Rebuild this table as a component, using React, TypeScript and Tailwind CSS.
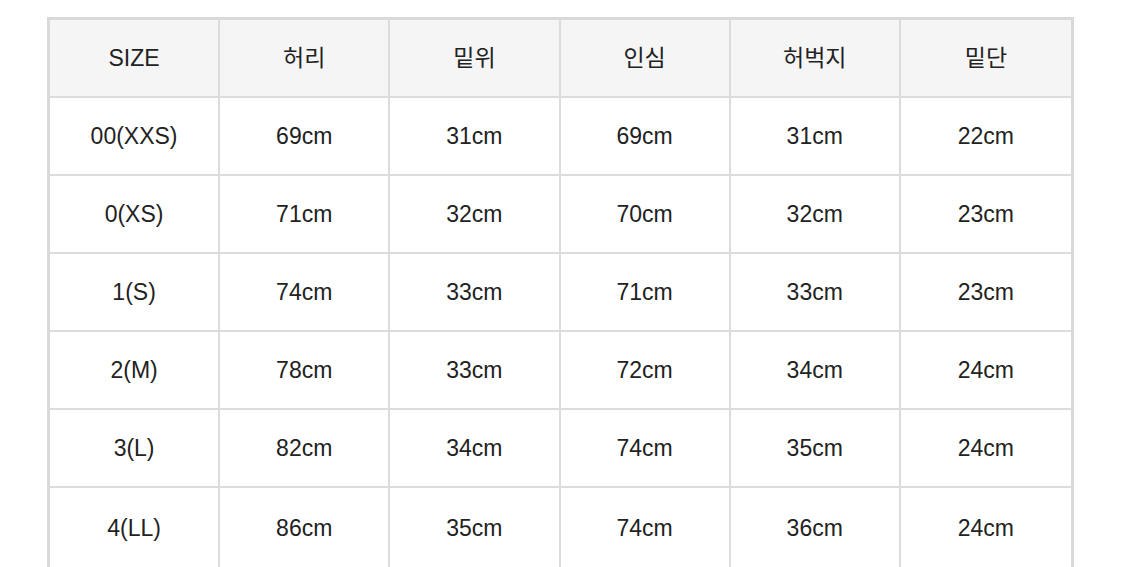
import React from "react";

const header = ["SIZE", "허리", "밑위", "인심", "허벅지", "밑단"];
const rows = [
  ["00(XXS)", "69cm", "31cm", "69cm", "31cm", "22cm"],
  ["0(XS)", "71cm", "32cm", "70cm", "32cm", "23cm"],
  ["1(S)", "74cm", "33cm", "71cm", "33cm", "23cm"],
  ["2(M)", "78cm", "33cm", "72cm", "34cm", "24cm"],
  ["3(L)", "82cm", "34cm", "74cm", "35cm", "24cm"],
  ["4(LL)", "86cm", "35cm", "74cm", "36cm", "24cm"],
];

export default function App() {
  return (
    <div
      className="w-[1125px] h-[567px] overflow-hidden bg-white pl-[47px] pt-[17px] text-[#222222] text-[23px]"
      style={{ fontFamily: '"Liberation Sans", "Noto Sans CJK KR", sans-serif' }}
    >
      <div className="w-[1027px] border-[3px] border-[#d9d9d9]">
        <div className="grid grid-cols-6 bg-[#f5f5f5]">
          {header.map((h, i) => (
            <div
              key={h}
              className={`h-[78px] flex items-center justify-center border-b-2 border-[#dcdcdc] ${i < 5 ? "border-r-2" : ""}`}
            >
              {h}
            </div>
          ))}
        </div>
        {rows.map((r, ri) => (
          <div key={ri} className="grid grid-cols-6 bg-white">
            {r.map((c, i) => (
              <div
                key={i}
                className={`${ri === rows.length - 1 ? "h-[82px]" : "h-[78px]"} flex items-center justify-center border-b-2 border-[#dcdcdc] ${i < 5 ? "border-r-2" : ""}`}
              >
                {c}
              </div>
            ))}
          </div>
        ))}
      </div>
    </div>
  );
}
